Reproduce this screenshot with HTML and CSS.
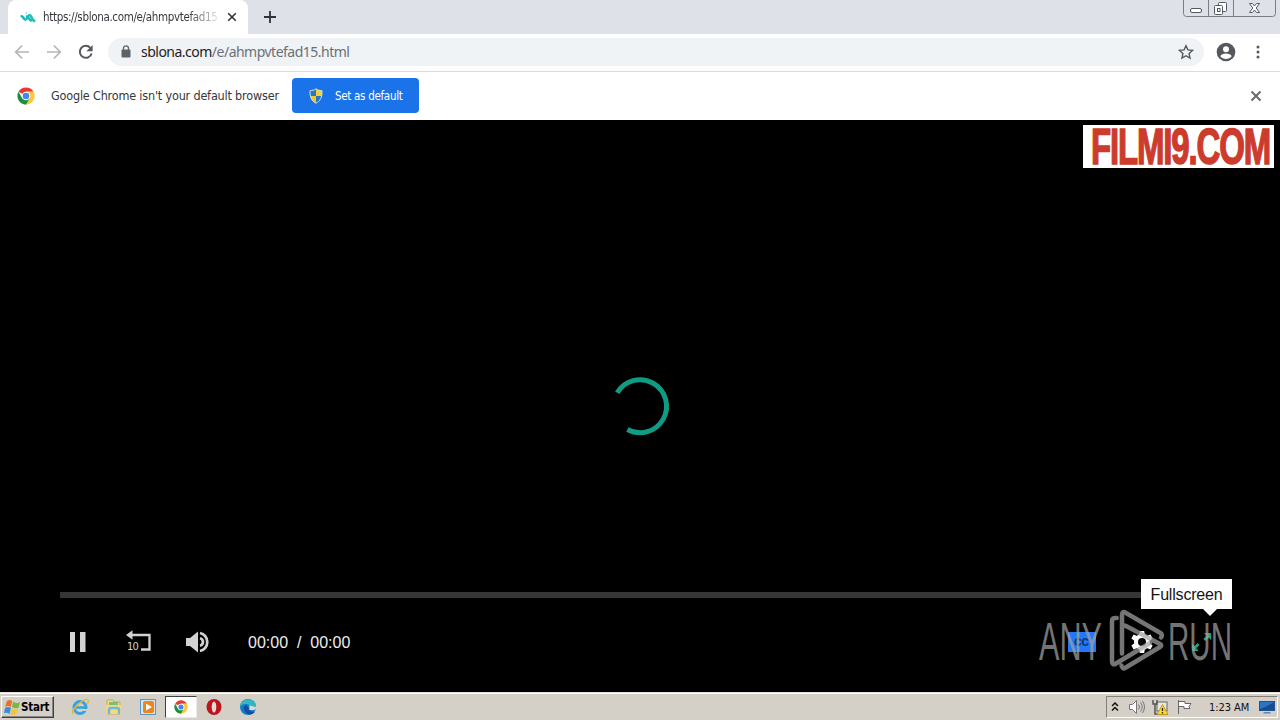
FILE: index.html
```html
<!DOCTYPE html>
<html lang="en">
<head>
<meta charset="utf-8">
<title>sblona.com</title>
<link rel="stylesheet" href="styles.css">
</head>
<body>
<svg width="0" height="0" class="defs">
  <symbol id="chrome" viewBox="0 0 48 48">
    <circle cx="24" cy="24" r="23" fill="#fff"/>
    <path d="M24 24 4.1 12.5A23 23 0 0 1 43.9 12.5H24Z" fill="#e33b2e"/>
    <path d="M43.9 12.5A23 23 0 0 1 24 47L34 29.7 24 12.5Z" fill="#fcc934"/>
    <path d="M4.1 12.5A23 23 0 0 0 24 47L34 29.7 24 34 14 29.7Z" fill="#1e8e3e"/>
    <circle cx="24" cy="24" r="11.5" fill="#fff"/>
    <circle cx="24" cy="24" r="8.8" fill="#4285f4"/>
  </symbol>
</svg>
<header class="tabstrip">
  <div class="tab">
    <svg class="favicon" width="16" height="14" viewBox="0 0 16 14" fill="none" stroke-linecap="round" stroke-width="2.6"><path d="M1.500 6.200c1.700-.2 2 3.300 4 3.300" stroke="#18b8c4"/><path d="M5.500 9.500c2 0 2.200-4.700 4.200-4.500 1.800.3 1.900 4.700 4.600 6" stroke="#20c5b0"/><path d="M7 6.500c1 .3 2 3 4 4" stroke="#18b8c4"/><circle cx="6.400" cy="2.800" r=".6" stroke="none" fill="#18b8c4"/></svg>
    <span class="tab-title">https://sblona.com/e/ahmpvtefad15</span>
    <svg class="tab-close" width="10" height="10" viewBox="0 0 10 10"><path d="M1.200 1.200l7.600 7.600M8.800 1.200L1.200 8.800" stroke="#333639" stroke-width="1.600"/></svg>
  </div>
  <svg class="new-tab" width="12" height="12" viewBox="0 0 12 12"><path d="M6 0v12M0 6h12" stroke="#303338" stroke-width="1.800"/></svg>
  <svg class="window-buttons" width="94" height="17" viewBox="0 0 94 17" fill="none" stroke="#787d86">
    <path d="M.5 0V13.500q0 3 3 3H89.500q3 0 3-3V0M25.500 0V16.500M50.500 0V16.500"/>
    <g stroke="#555a62"><rect x="7.500" y="8.500" width="11" height="4" rx="1.500" fill="#fff"/><rect x="35.500" y="2.500" width="8" height="9" rx="1" fill="#fff"/><rect x="31.500" y="5.500" width="8" height="9" rx="1" fill="#fff"/><rect x="34.500" y="8.500" width="2.500" height="3"/>
    <path fill="#fff" d="M66.500 3.500h3l2 2.500 2-2.500h3l-3.300 4.500 3.300 4.500h-3l-2-2.500-2 2.500h-3l3.300-4.500Z"/></g>
  </svg>
</header>
<nav class="toolbar">
  <svg class="nav-icon" width="16" height="16" viewBox="0 0 16 16" fill="none" stroke="#b4b6b9" stroke-width="1.700"><path d="M15 8H2M8.200 1.500L1.700 8l6.500 6.500"/></svg>
  <svg class="nav-icon" width="16" height="16" viewBox="0 0 16 16" fill="none" stroke="#b4b6b9" stroke-width="1.700"><path d="M1 8h13M7.800 1.500L14.300 8l-6.500 6.500"/></svg>
  <svg class="nav-icon" width="16" height="16" viewBox="0 0 16 16"><path d="M13.600 9.500A6 6 0 1 1 12.300 3.800" fill="none" stroke="#55585d" stroke-width="2"/><path d="M14.600 1v6.200H8.400Z" fill="#55585d"/></svg>
  <div class="omnibox">
    <svg width="10" height="13" viewBox="0 0 10 13"><rect x=".5" y="4.500" width="9" height="8" rx="1" fill="#5f6368"/><path d="M2.500 5V3.300a2.500 2.500 0 0 1 5 0V5" fill="none" stroke="#5f6368" stroke-width="1.300"/></svg>
    <span class="url"><span class="host">sblona.com</span><span class="path">/e/ahmpvtefad15.html</span></span>
    <svg class="star" width="16" height="16" viewBox="0 0 16 16"><path d="M8 1.700l1.900 4.200 4.600.5-3.400 3.100.9 4.500L8 11.700 4 14l.9-4.500L1.500 6.400l4.600-.5Z" fill="none" stroke="#55595e" stroke-width="1.400"/></svg>
  </div>
  <svg class="avatar" width="20" height="20" viewBox="0 0 20 20"><circle cx="10" cy="10" r="9.300" fill="#55595e"/><circle cx="10" cy="7.300" r="3" fill="#fff"/><path d="M4.300 14.200c1.500-3.600 9.900-3.600 11.400 0-2.800 3.600-8.600 3.600-11.400 0Z" fill="#fff"/></svg>
  <svg class="menu" width="4" height="14" viewBox="0 0 4 14" fill="#55595e"><circle cx="2" cy="2" r="1.500"/><circle cx="2" cy="7" r="1.500"/><circle cx="2" cy="12" r="1.500"/></svg>
</nav>
<section class="infobar">
  <svg width="18" height="18"><use href="#chrome"/></svg>
  <span class="info-text">Google Chrome isn't your default browser</span>
  <button class="set-default">
    <svg width="14" height="16" viewBox="0 0 14 16"><path d="M7 .8C5 2.300 3 2.600 1 2.600.9 4.500 1 6.300 1.300 8H7Z" fill="#2877c4"/><path d="M7 .8C9 2.300 11 2.600 13 2.600c.1 1.900 0 3.700-.3 5.400H7Z" fill="#f5cf38"/><path d="M7 8h5.700C12 11.500 10 13.800 7 15.200Z" fill="#2877c4"/><path d="M7 8H1.300C2 11.500 4 13.800 7 15.200Z" fill="#efc735"/><path d="M7 .8C5 2.300 3 2.600 1 2.600.6 9 2.800 13.300 7 15.200c4.200-1.900 6.400-6.200 6-12.600-2 0-4-.3-6-1.800Z" fill="none" stroke="#d9dfcd"/></svg>
    <span>Set as default</span>
  </button>
  <svg class="info-close" width="12" height="12" viewBox="0 0 12 12"><path d="M1.500 1.500l9 9M10.500 1.500l-9 9" stroke="#65686c" stroke-width="1.900"/></svg>
</section>
<main class="player">
  <svg class="site-logo" width="191" height="43" viewBox="0 0 191 43"><rect width="191" height="43" fill="#fff"/><g transform="translate(8 39) scale(.66 1)"><text textLength="273" lengthAdjust="spacing" class="logo-text">FILMI9.COM</text></g></svg>
  <svg class="spinner" width="64" height="64" viewBox="0 0 64 64"><path d="M9.200 18.800A26.500 26.500 0 1 1 19.400 55.500" fill="none" stroke="#0f9b84" stroke-width="5"/></svg>
  <div class="progress"></div>
  <div class="controls">
    <svg width="18" height="22" viewBox="0 0 18 22" fill="#d2d2d2"><path d="M1 1h5v20H1zM11 1h5.500v20H11z"/></svg>
    <svg class="rewind" width="26" height="24" viewBox="0 0 26 24"><path d="M6 5H23.500V19.500H15" fill="none" stroke="#d2d2d2" stroke-width="2.300"/><path d="M0 5L6.500.3v9.400Z" fill="#d2d2d2"/><text x="1" y="20" class="ten">10</text></svg>
    <svg class="volume" width="26" height="22" viewBox="0 0 26 22"><path d="M1 7h4l8-6.500v21L5 15H1Z" fill="#d2d2d2"/><path d="M15 7.300a3.800 3.800 0 0 1 0 7.400M15 2a9.200 9.200 0 0 1 0 18" fill="none" stroke="#d2d2d2" stroke-width="2.700"/></svg>
    <span class="time">00:00&nbsp; /&nbsp; 00:00</span>
    <svg class="cc" width="28" height="20" viewBox="0 0 28 20"><rect width="28" height="20" fill="#2377fb"/><text x="6" y="14" class="cc-text" textLength="15">cc</text></svg>
    <svg class="gear" width="24" height="24" viewBox="-12 -12 24 24"><g fill="#fff"><circle r="8"/><g id="teeth"><path d="M-2.200-11h4.400l.8 5h-6zM-2.200 11h4.400l.8-5h-6z"/></g><use href="#teeth" transform="rotate(60)"/><use href="#teeth" transform="rotate(120)"/></g><circle r="4" fill="#050505"/></svg>
    <svg class="fullscreen" width="22" height="22" viewBox="0 0 22 22"><path d="M13 2h7v7l-2.300-2.300-3.400 3.400-2-2 3.300-3.400ZM1 20v-7l2.300 2.300 3.200-3.200 2 2-3.200 3.200L7.600 20Z" fill="#16a58a"/></svg>
  </div>
  <svg class="watermark" width="200" height="66" viewBox="0 0 200 66">
    <g class="mark-text"><text x="3" y="52" textLength="63" lengthAdjust="spacingAndGlyphs">ANY</text><text x="132" y="52" textLength="64" lengthAdjust="spacingAndGlyphs">RUN</text></g>
    <path d="M80.700 10Q76 9.500 76 13V53Q76 58 80 55.500L114 35M86 45.500V7Q86 2.500 90 5L124.500 25Q127 26.500 125 29.500M86 28V17L90 18 124 36Q126.500 37.500 124 39L89 60Q86.500 61.500 85.500 57.500" class="mark-lines"/>
  </svg>
  <div class="tooltip">Fullscreen</div>
</main>
<footer class="taskbar">
  <div class="start"><svg width="17" height="16" viewBox="0 0 17 16"><path d="M3 2Q6 0 8 2L7 8Q4 6 1 8Z" fill="#ed6c2f"/><path d="M9 2.500Q12 5 16 3L14.500 9Q11 10 8 8Z" fill="#79b943"/><path d="M1 9Q4 7 7 9L5.500 15Q3 13 0 14Z" fill="#3c8cd7"/><path d="M8 9.500Q11 11 14 10L12.500 15Q9 17 6.500 15Z" fill="#f5c434"/></svg><b>Start</b></div>
  <svg class="app" width="18" height="18" viewBox="0 0 18 18" fill="none"><circle cx="9" cy="9.500" r="6" stroke="#36a2df" stroke-width="3"/><path d="M4 9.500h11" stroke="#36a2df" stroke-width="2.500"/><path d="M12 11h6v2h-6z" fill="#d4d0c8"/><path d="M2 16C-1 12 14-1 17 2c1 1 0 3-1 4" stroke="#e3b73a" stroke-width="1.500"/></svg>
  <svg class="app" width="18" height="18" viewBox="0 0 18 18"><path d="M2 2h6l1 2h6v12H2Z" fill="#f5df83" stroke="#c9a94d"/><path d="M4 4h9v3H4Z" fill="#7abf75"/><path d="M1 7h15v9H1Z" fill="#f3da82"/><path d="M4 16v-4q0-2 2-2h6q2 0 2 2v4" fill="none" stroke="#70b6dd" stroke-width="2.500"/></svg>
  <svg class="app" width="18" height="18" viewBox="0 0 18 18"><rect x="1.500" y="1.500" width="15" height="15" fill="#d3e4f3" stroke="#5a94c9"/><rect x="4" y="3" width="11" height="12" rx="2" fill="#ef8419"/><path d="M7 5.500l6 3.500-6 3.500Z" fill="#fff"/></svg>
  <div class="active-app"><svg width="14" height="14"><use href="#chrome"/></svg></div>
  <svg class="app opera" width="16" height="18" viewBox="0 0 16 18"><ellipse cx="8" cy="9" rx="7.500" ry="8" fill="#bd1520"/><ellipse cx="8" cy="9" rx="2.300" ry="5.500" fill="#e8dbd5"/></svg>
  <svg class="app edge" width="18" height="18" viewBox="0 0 18 18"><circle cx="9" cy="9" r="8" fill="#1679c8"/><path d="M1 8C2-1 17-1 17 8c0 4-4 4-6 3 1-3-1-5-4-5-3 0-5 1-6 3Z" fill="#35b6c0"/><path d="M7 7c-4 2-2 8 3 9.500 2 .5 5-1 6-3-4 1-7-1-6.500-4Z" fill="#0f4f9e"/><path d="M10 7.500q1 2.500 0 4 3 1.500 6.500 0L17 9Z" fill="#d8dcd8"/></svg>
  <div class="tray">
    <svg width="8" height="10" viewBox="0 0 8 10" fill="none" stroke="#111" stroke-width="1.500"><path d="M1 4l3-3 3 3M1 8.500l3-3 3 3"/></svg>
    <svg class="sound" width="17" height="16" viewBox="0 0 17 16" fill="none" stroke="#777"><path d="M1.500 5.500h3l4-4v13l-4-4h-3Z" fill="#fff"/><path d="M10.500 5.500q2 2.500 0 5M12.500 3.500q3.500 4.500 0 9M14.500 2q4 6 0 12"/></svg>
    <svg class="network" width="17" height="17" viewBox="0 0 17 17"><rect x="5" y="3" width="10" height="9" fill="#e6e8e8" stroke="#666"/><path d="M1 1v4h4V1M3 5v10h4" fill="none" stroke="#555" stroke-width="1.500"/><path d="M10.500 5.500l5.500 10H5Z" fill="#ffdb28" stroke="#c29a19"/><path d="M10.500 9v3M10.500 13v1.500" stroke="#222" stroke-width="1.300"/></svg>
    <svg class="flag" width="17" height="16" viewBox="0 0 17 16"><path d="M2.500 1v14M3 2.500h6v2h6l-2 3 1 2H8v-2H3" fill="#fff" stroke="#666"/></svg>
    <span class="clock">1:23 AM</span>
    <svg class="desktop" width="16" height="14" viewBox="0 0 16 14"><rect x=".5" y="1.500" width="15" height="9" fill="#2b74c5" stroke="#235491"/><path d="M1 9Q8 7 15 2v8H1Z" fill="#164a91"/><path d="M5 12h6l1 1.500H4Z" fill="#5789b8"/></svg>
  </div>
</footer>
</body>
</html>
```

FILE: styles.css
```css
*{box-sizing:border-box}
body{margin:0;width:1280px;height:720px;overflow:hidden;background:#000;display:flex;flex-direction:column;font-family:"DejaVu Sans Condensed","DejaVu Sans",sans-serif}
svg{display:block;flex:none}
.defs{position:absolute}
.tabstrip{height:34px;background:#dee1e8;display:flex;align-items:flex-start;padding-left:8px}
.tab{width:240px;height:34px;background:#fff;border-radius:8px 8px 0 0;display:flex;align-items:center;padding-left:12px}
.tab-title{width:176px;margin-left:7px;font-size:11.500px;line-height:16px;white-space:nowrap;overflow:hidden;color:transparent;background:linear-gradient(90deg,#303338 82%,#aaa 94%,#eee);-webkit-background-clip:text;background-clip:text;letter-spacing:-.34px}
.tab-close{margin-left:8px}
.new-tab{margin:11px 0 0 16px}
.window-buttons{margin-left:auto;margin-right:3px}
.toolbar{height:38px;background:#fff;border-bottom:1px solid #dadce0;display:flex;align-items:center;padding:0 20px 2px 14px}
.nav-icon{margin-right:16px}
.omnibox{width:1096px;height:28px;margin-left:-2px;border-radius:14px;background:#f0f3f6;display:flex;align-items:center;padding:0 10px 0 13px}
.url{margin-left:10px;font:14px/20px "Noto Sans",sans-serif;letter-spacing:-.51px;color:#6b7076;white-space:nowrap}
.host{color:#202124}
.star{margin-left:auto}
.avatar{margin-left:12px}
.menu{margin-left:auto}
.infobar{height:48px;background:#fff;display:flex;align-items:center;padding:0 18px 1px 17px}
.info-text{width:228px;margin-left:16px;font-size:12.500px;letter-spacing:-.18px;color:#35373a;white-space:nowrap}
.set-default{width:127px;height:35px;margin-left:13px;border:0;border-radius:4px;background:#1a73e8;display:flex;align-items:center;padding:0 0 0 17px;color:#fff;font:11.500px "DejaVu Sans Condensed",sans-serif}
.set-default span{margin-left:12px;letter-spacing:-.3px;white-space:nowrap}
.info-close{margin-left:auto}
.player{position:relative;height:572px;background:#000;padding:5px 48px 0 60px;display:flex;flex-direction:column}
.site-logo{align-self:flex-end;margin-right:-42px}
.logo-text{font:bold 50px "Liberation Sans",sans-serif;fill:#cc3b2b;stroke:#cc3b2b;stroke-width:1.500px}
.spinner{margin:206px 0 0 548px}
.progress{height:6px;margin-top:154px;background:#363636}
.controls{height:88px;display:flex;align-items:center;padding-left:9px}
.rewind{margin-left:39px}.volume{margin-left:33px}
.ten{font:11px "DejaVu Sans Condensed",sans-serif;letter-spacing:-.7px;fill:#d2d2d2}
.time{margin-left:37px;width:110px;padding-top:1px;font:16px/20px "Liberation Sans",sans-serif;color:#eee;white-space:nowrap}
.cc{margin-left:710px}
.cc-text{font:bold 14px "Liberation Sans",sans-serif;fill:#12366d}
.gear{margin-left:34px}.fullscreen{margin-left:37px}
.watermark{position:absolute;left:1036px;top:488px}
.mark-text{font:53px "Liberation Sans",sans-serif;fill:#a2a2a2;fill-opacity:.72}
.mark-lines{fill:none;stroke:#a2a2a2;stroke-opacity:.72;stroke-width:4.500px;stroke-linejoin:round;stroke-linecap:round}
.tooltip{position:absolute;left:1141px;top:459px;width:91px;height:30px;background:#fff;color:#141414;font:16px/31px "Liberation Sans",sans-serif;letter-spacing:-.2px;text-align:center}
.tooltip::after{content:"";position:absolute;left:62px;top:30px;border:7px solid transparent;border-top-color:#fff;border-bottom:0}
.taskbar{height:28px;background:#d4d0c8;border-top:1px solid #e5e2dc;box-shadow:inset 0 1px #fff;display:flex;align-items:center;padding:1px 2px 0 1px}
.start{width:53px;height:22px;border:1px solid;border-color:#fff #404040 #404040 #fff;box-shadow:inset -1px -1px #888;display:flex;align-items:center;padding-left:2px;font-size:11.500px;letter-spacing:-.25px}
.app{margin-left:16px}
.start + .app{margin-left:17px}
.active-app{width:32px;height:22px;margin-left:8px;background:#fff;border:1px solid;border-color:#404040 #ece9e2 #ece9e2 #404040;display:flex;align-items:center;justify-content:center}
.opera{margin-left:9px}
.edge{margin-left:17px}
.tray{width:172px;height:22px;margin-left:auto;border:1px solid;border-color:#858179 #fff #fff #858179;display:flex;align-items:center;padding-left:4px}
.sound{margin-left:9px}.network{margin-left:7px}.flag{margin-left:7px}
.clock{width:42px;margin-left:16px;font-size:11px;letter-spacing:-.05px;white-space:nowrap;color:#111}
.desktop{margin-left:8px}
```
